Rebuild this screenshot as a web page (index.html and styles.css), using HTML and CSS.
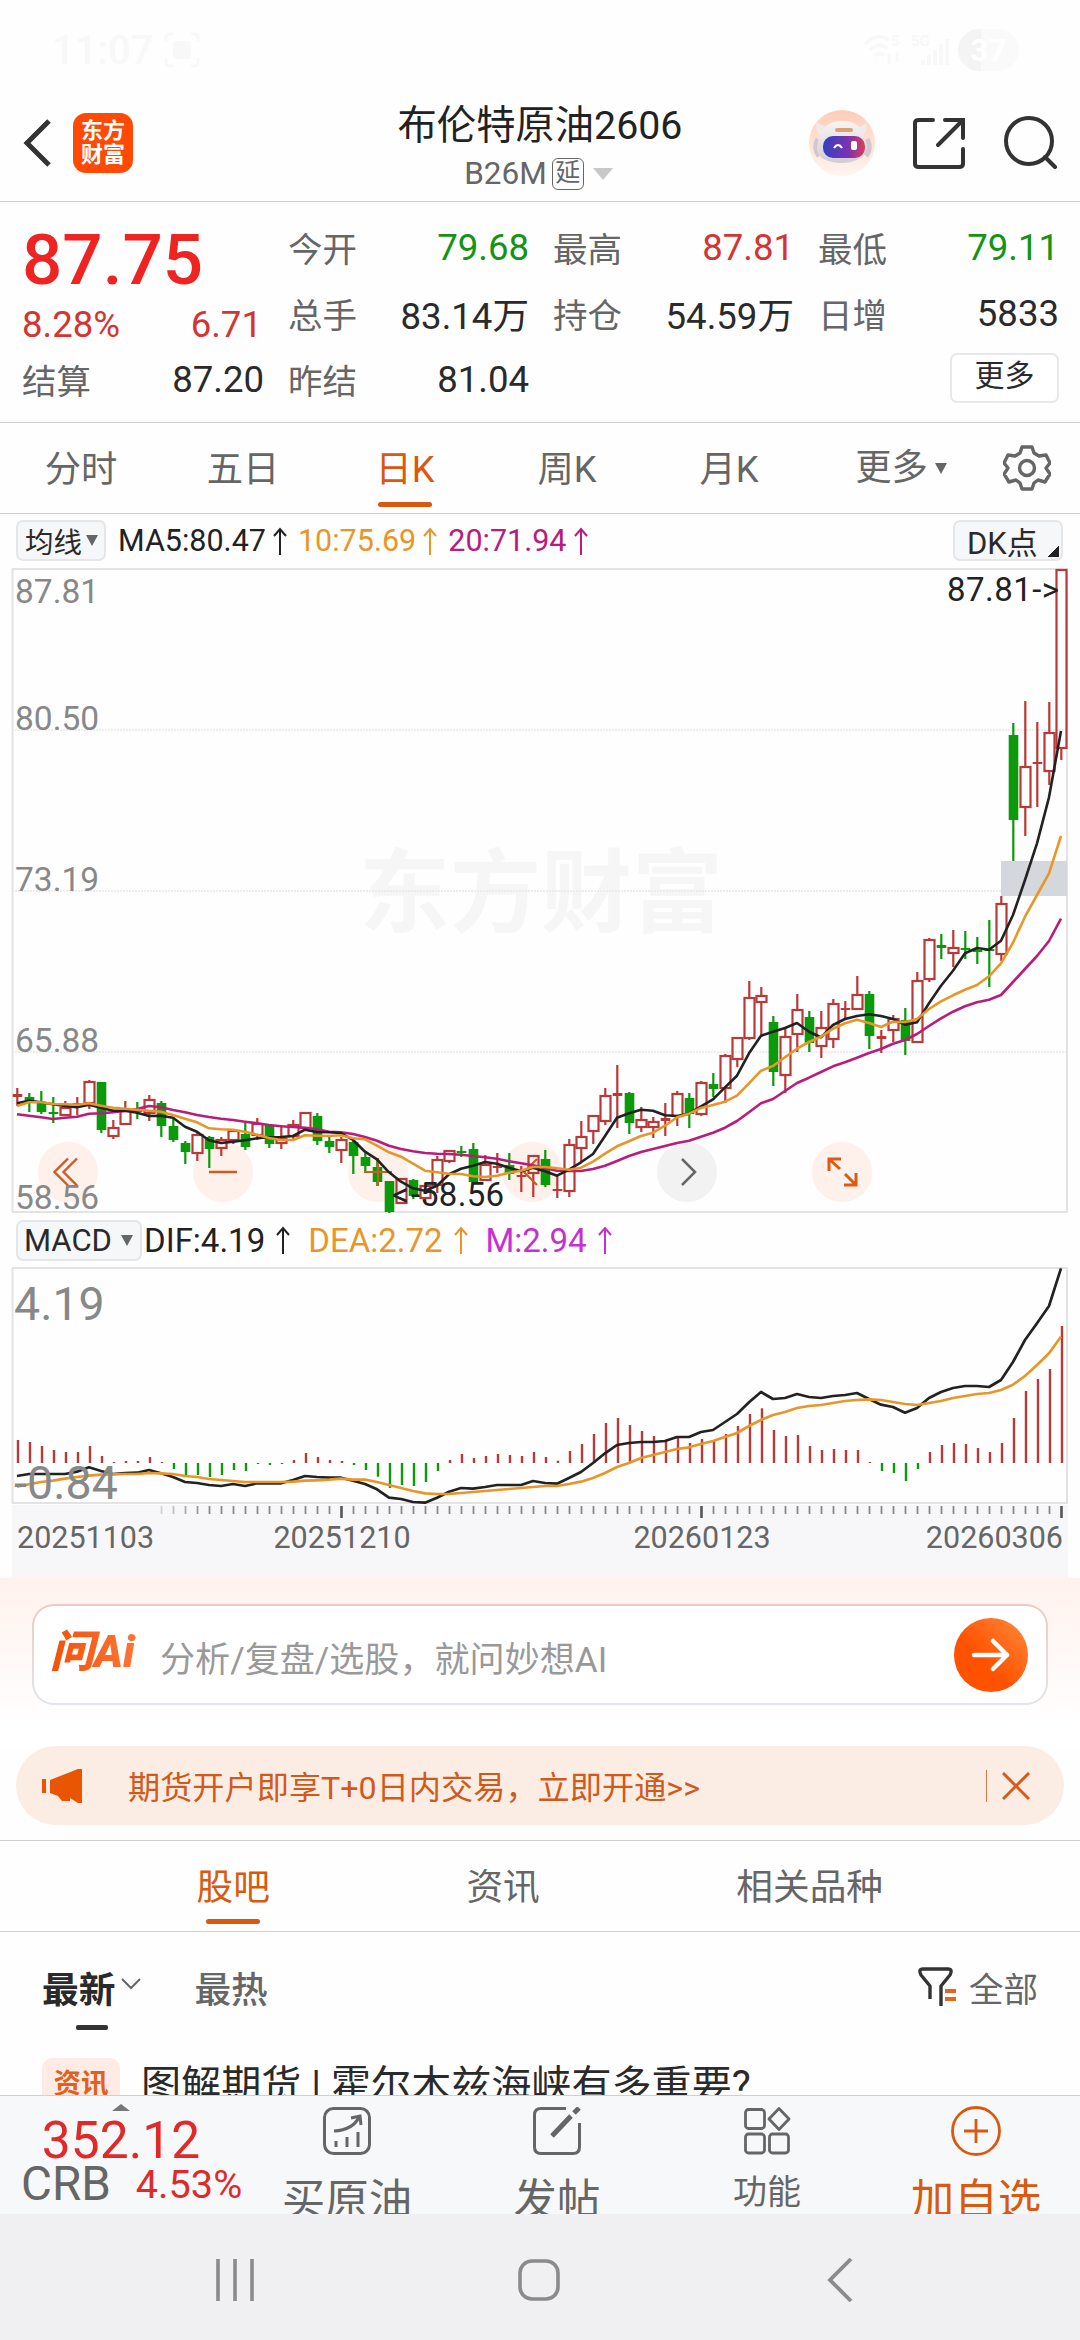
FILE: index.html
```
<!DOCTYPE html>
<html lang="zh-CN">
<head>
<meta charset="utf-8">
<title>布伦特原油2606</title>
<link rel="stylesheet" href="styles.css">
</head>
<body>
<div class="status">
  <span class="clock">11:07</span>
  <svg class="shot" width="36" height="36" viewBox="0 0 36 36"><path d="M2 10V6q0-4 4-4h4M26 2h4q4 0 4 4v4M34 26v4q0 4-4 4h-4M10 34H6q-4 0-4-4v-4" fill="none" stroke="currentColor" stroke-width="3"/><rect x="9" y="9" width="18" height="18" rx="4" fill="currentColor"/></svg>
  <svg class="wifi" width="38" height="36" viewBox="0 0 38 36"><g fill="none" stroke="currentColor" stroke-width="3.5"><path d="M1 12q12-12 24-4M6 18q8-8 17-2M11 24q4-4 9-1"/></g><text x="27" y="14" font-size="15" font-weight="700" fill="currentColor">5</text><path d="M25 22v10M33 30V20" stroke="currentColor" stroke-width="3"/></svg>
  <svg class="cell" width="38" height="36" viewBox="0 0 38 36"><text x="0" y="14" font-size="15" font-weight="700" fill="currentColor">5G</text><path d="M12 33v-5M18 33V23M24 33V18M30 33V12M36 33V7" stroke="currentColor" stroke-width="4"/></svg>
  <span class="battery">37</span>
</div>

<header class="header">
  <div class="header-left">
    <svg width="30" height="50" viewBox="0 0 30 50"><path d="M26 3L4 25l22 22" fill="none" stroke="#333" stroke-width="5"/></svg>
    <div class="brand"><span>东方</span><span>财富</span></div>
  </div>
  <div class="header-title">
    <h1>布伦特原油2606</h1>
    <div class="code">B26M<span class="delay">延</span><i class="tri"></i></div>
  </div>
  <div class="header-right">
    <svg width="66" height="68" viewBox="0 0 66 68">
      <defs>
        <linearGradient id="halo" x1="0" y1="0" x2="0" y2="1"><stop offset="0" stop-color="#ffcdb8"/><stop offset="1" stop-color="#fff6f1"/></linearGradient>
        <linearGradient id="visor" x1="0" y1="0" x2="1" y2="0"><stop offset="0" stop-color="#3340c0"/><stop offset=".6" stop-color="#7a34b0"/><stop offset="1" stop-color="#d8405c"/></linearGradient>
        <linearGradient id="shell" x1="0" y1="0" x2="0" y2="1"><stop offset="0" stop-color="#f8f5f6"/><stop offset="1" stop-color="#d2ccd4"/></linearGradient>
      </defs>
      <circle cx="33" cy="34" r="33" fill="url(#halo)"/>
      <path d="M8 13q4 5 12 4l-8 10q-7-6-4-14M57 14q-3 4-10 4l6 9q7-6 4-13" fill="#f0eaec"/>
      <path d="M9 30q-5 9 1 17M58 30q5 9-1 17" stroke="#cfc8d0" stroke-width="5" fill="none"/>
      <path d="M33 12c13 0 20 6 23 17s1 16-5 20-12 5-18 5-14-1-20-5-6-10-3-20 10-17 23-17z" fill="url(#shell)"/>
      <rect x="14" y="27" width="42" height="22" rx="10" fill="url(#visor)"/>
      <path d="M25 39q4-6 8 0" fill="none" stroke="#fff" stroke-width="2.200"/><rect x="42" y="32" width="6" height="9" rx="2" fill="#fff"/>
      <rect x="26" y="19" width="18" height="4" rx="2" fill="#dca072"/>
    </svg>
    <svg width="52" height="52" viewBox="0 0 52 52" fill="none" stroke="#333" stroke-width="4" stroke-linecap="round"><path d="M20 3H6q-4 0-4 3v41q0 3 4 3h40q4 0 4-3V32M32 3h18v18M49 4L25 28"/></svg>
    <svg width="54" height="54" viewBox="0 0 54 54" fill="none" stroke="#333" stroke-width="4" stroke-linecap="round"><circle cx="25" cy="26" r="23"/><path d="M41 42l10 10"/></svg>
  </div>
</header>

<section class="quote">
  <div class="quote-main">
    <div class="price">87.75</div>
    <div class="pair up"><span>8.28%</span><span class="chg">6.71</span></div>
    <div class="pair"><label>结算</label><span>87.20</span></div>
  </div>
  <div class="quote-grid">
    <div class="pair"><label>今开</label><span class="down">79.68</span></div>
    <div class="pair"><label>最高</label><span class="up">87.81</span></div>
    <div class="pair"><label>最低</label><span class="down">79.11</span></div>
    <div class="pair"><label>总手</label><span>83.14万</span></div>
    <div class="pair"><label>持仓</label><span>54.59万</span></div>
    <div class="pair"><label>日增</label><span>5833</span></div>
    <div class="pair"><label>昨结</label><span>81.04</span></div>
    <div></div>
    <div class="pair end"><button class="more">更多</button></div>
  </div>
</section>

<nav class="periods">
  <span>分时</span><span>五日</span><span class="active">日K</span><span>周K</span><span>月K</span>
  <span class="drop">更多<i class="tri small"></i></span>
  <svg width="48" height="48" viewBox="0 0 48 48" fill="none" stroke="#666" stroke-width="3.4" stroke-linejoin="round"><path d="M19 3h10l2 6 5 3 7-1 4 8-4 5 4 6-5 8-7-2-4 3-2 6H19l-2-6-4-3-7 2-5-8 4-6-4-5 4-8 7 1 5-3z"/><circle cx="24" cy="24" r="7.5"/></svg>
</nav>

<div class="legend">
  <span class="chip">均线<i class="tri small"></i></span>
  <span class="ma5">MA5:80.47<svg class="arr" viewBox="0 0 14 28"><path d="M7 28V2M1 9l6-7 6 7"/></svg></span>
  <span class="ma10">10:75.69<svg class="arr" viewBox="0 0 14 28"><path d="M7 28V2M1 9l6-7 6 7"/></svg></span>
  <span class="ma20">20:71.94<svg class="arr" viewBox="0 0 14 28"><path d="M7 28V2M1 9l6-7 6 7"/></svg></span>
  <span class="chip dk">DK点<i class="corner"></i></span>
</div>

<svg class="chart" id="kline" width="1080" height="646" viewBox="0 568 1080 646"></svg>

<div class="legend macd">
  <span class="chip">MACD<i class="tri small"></i></span>
  <span class="ma5">DIF:4.19<svg class="arr" viewBox="0 0 14 28"><path d="M7 28V2M1 9l6-7 6 7"/></svg></span>
  <span class="ma10">DEA:2.72<svg class="arr" viewBox="0 0 14 28"><path d="M7 28V2M1 9l6-7 6 7"/></svg></span>
  <span class="hist">M:2.94<svg class="arr" viewBox="0 0 14 28"><path d="M7 28V2M1 9l6-7 6 7"/></svg></span>
</div>

<svg class="chart" id="macd" width="1080" height="312" viewBox="0 1266 1080 312"></svg>

<section class="ask">
  <div class="ask-box">
    <span class="ask-logo">问Ai</span>
    <span class="ask-hint">分析/复盘/选股，就问妙想AI</span>
    <span class="go"><svg width="40" height="34" viewBox="0 0 40 34" fill="none" stroke="#fff" stroke-width="4.500" stroke-linecap="round" stroke-linejoin="round"><path d="M3 17h33M22 3l14 14-14 14"/></svg></span>
  </div>
</section>

<div class="banner">
  <svg width="40" height="36" viewBox="0 0 40 36" fill="#ea5504"><path d="M0 11h4v14H0zM8 12L36 1h4v34h-4l-8-5v3h-8l-4-5-8-3z"/></svg>
  <span class="banner-text">期货开户即享T+0日内交易，立即开通&gt;&gt;</span>
  <i class="rule"></i>
  <svg width="28" height="28" viewBox="0 0 28 28" stroke="#d9591a" stroke-width="3"><path d="M1 1l26 26M27 1L1 27"/></svg>
</div>

<nav class="tabs">
  <span class="active">股吧</span><span>资讯</span><span>相关品种</span>
</nav>

<div class="sort">
  <span class="on">最新</span>
  <svg class="chev" width="20" height="12" viewBox="0 0 20 12" fill="none" stroke="#666" stroke-width="2"><path d="M1 1l9 9 9-9"/></svg>
  <span class="hot">最热</span>
  <svg class="filter" width="40" height="40" viewBox="0 0 40 40" fill="none" stroke="#333" stroke-width="3.4" stroke-linejoin="round"><path d="M12 32V19L3 8Q0 2 5 2h25q5 0 2 6l-9 11v20"/><path d="M27 24h11M27 32h11" stroke="#e8641b" stroke-width="4"/></svg>
  <span class="all">全部</span>
</div>

<article class="post">
  <span class="tag">资讯</span>
  <span class="post-title">图解期货 | 霍尔木兹海峡有多重要?</span>
</article>

<footer class="actions">
  <div class="crb">
    <i class="tri-up"></i>
    <div class="crb-value">352.12</div>
    <div class="crb-row"><span class="crb-name">CRB</span><span class="crb-pct">4.53%</span></div>
  </div>
  <div class="action">
    <svg width="48" height="48" viewBox="0 0 48 48" fill="none" stroke="#666" stroke-width="3"><rect x="1.5" y="1.5" width="45" height="45" rx="9"/><path d="M11 24q19-1 25-14M28 11l9-2 1 9M13 34v6M24 30v10M35 25v15"/></svg>
    <span>买原油</span>
  </div>
  <div class="action">
    <svg width="48" height="48" viewBox="0 0 48 48" fill="none" stroke="#666" stroke-width="3"><path d="M33 1.500H8q-6.500 0-6.500 6.500v32q0 6.500 6.500 6.500h32q6.500 0 6.500-6.500V16"/><path d="M19 29L38 9M41 6l5-5" stroke-width="5"/></svg>
    <span>发帖</span>
  </div>
  <div class="action fn">
    <svg width="48" height="48" viewBox="0 0 48 48" fill="none" stroke="#666" stroke-width="2.800"><rect x="2.500" y="2.500" width="19" height="19" rx="3"/><rect x="2.500" y="27" width="19" height="19" rx="3"/><rect x="26.500" y="27" width="19" height="19" rx="3"/><path d="M36 1.500L46 12 36 22.500 26 12z" stroke-linejoin="round"/></svg>
    <span>功能</span>
  </div>
  <div class="action add">
    <svg width="50" height="50" viewBox="0 0 50 50" fill="none" stroke="#d9590f" stroke-width="2.800"><circle cx="25" cy="25" r="23.500"/><path d="M13 25h24M25 13v24"/></svg>
    <span>加自选</span>
  </div>
</footer>

<div class="sysnav">
  <svg width="38" height="42" viewBox="0 0 38 42" stroke="#8b8b8d" stroke-width="3.600"><path d="M2 0v42M19 0v42M36 0v42"/></svg>
  <svg width="42" height="42" viewBox="0 0 42 42" fill="none" stroke="#8b8b8d" stroke-width="3.600"><rect x="2" y="2" width="38" height="38" rx="12"/></svg>
  <svg width="26" height="44" viewBox="0 0 26 44" fill="none" stroke="#8b8b8d" stroke-width="3.800"><path d="M24 1L3 22l21 21"/></svg>
</div>
<script src="chart.js"></script>
</body>
</html>
```
FILE: styles.css
```
* { box-sizing: border-box; }
body { margin: 0; width: 1080px; height: 2340px; overflow: hidden; background: #fefefe; color: #2a2a2a; font-family: Roboto, "Noto Sans CJK SC", sans-serif; display: flex; flex-direction: column; }
body > * { flex: none; }
svg { display: block; flex: none; }
h1 { margin: 0; font-weight: 400; }
i { display: block; flex: none; }

.status { height: 100px; padding: 0 61px 0 52px; display: flex; align-items: center; color: #f8f8f8; font-weight: 500; }
.clock { font-size: 40px; width: 112px; }
.wifi { margin-left: auto; }
.cell { margin-left: 9px; }
.battery { margin-left: 9px; width: 61px; height: 42px; border-radius: 21px; background: linear-gradient(90deg, #f4f4f4 37%, #fafafa 37%); color: #fff; font-size: 32px; line-height: 42px; text-align: center; font-weight: 700; }

.header { height: 102px; border-bottom: 1px solid #d0d0d0; display: grid; grid-template-columns: 340px 1fr 340px; }
.header-left { display: flex; align-items: center; padding: 0 0 16px 23px; gap: 20px; }
.brand { width: 60px; height: 60px; border-radius: 13px; background: #ff4a05; color: #fff; font-size: 22px; font-weight: 700; line-height: 24px; display: flex; flex-direction: column; align-items: center; justify-content: center; }
.header-title { display: flex; flex-direction: column; align-items: center; }
.header-title h1 { font-size: 39.300px; line-height: 52px; color: #222; }
.code { display: flex; align-items: center; font-size: 31.500px; line-height: 43px; color: #666; padding-right: 3px; }
.delay { margin-left: 5px; width: 32px; height: 32px; border: 1.500px solid #666; border-radius: 6px; font-size: 25px; line-height: 28px; text-align: center; }
.tri { width: 0; height: 0; border: 10px solid transparent; border-top: 12px solid #c8c8c8; border-bottom: 0; margin-left: 9px; }
.tri.small { border-width: 11px 6px 0; border-top-color: #666; margin-left: 4px; }
.header-right { display: flex; align-items: center; gap: 38px; padding: 0 0 16px 69px; }
.header-right svg:last-child { margin-left: 1px; margin-top: -2px; }

.quote { height: 221px; border-bottom: 1px solid #d0d0d0; padding: 12px 21px 0 22px; display: grid; grid-template-columns: 242px 1fr; column-gap: 24px; }
.quote-grid { display: grid; grid-template-columns: repeat(3, 1fr); grid-auto-rows: 66px; column-gap: 24px; }
.pair { display: flex; justify-content: space-between; align-items: center; font-size: 36.600px; height: 66px; }
.pair label { font-size: 34.500px; color: #666; }
.pair.end { justify-content: flex-end; }
.up { color: #d33532; }
.down { color: #139413; }
.price { height: 89px; font-size: 71px; line-height: 92px; font-weight: 500; color: #ee2423; }
.quote-main .pair.up { height: 43px; }
.quote-main .chg { margin-right: 2px; }
.more { width: 109px; height: 50px; margin-top: -3px; border: 2px solid #e8e8e8; border-radius: 7px; background: #fff; color: #2a2a2a; font: inherit; font-size: 30px; line-height: 40px; padding: 0 0 4px; }

.periods { height: 91px; border-bottom: 1px solid #d0d0d0; display: grid; grid-template-columns: repeat(5, 162px) 182px 1fr; font-size: 36.300px; color: #666; align-items: center; text-align: center; }
.periods span { height: 90px; line-height: 94px; }
.periods .active, .tabs .active { color: #d9590f; position: relative; }
.active::after { content: ""; position: absolute; left: 50%; margin-left: -27px; bottom: 6px; width: 54px; height: 5px; border-radius: 3px; background: #d9590f; }
.periods .drop { display: flex; align-items: center; justify-content: center; }
.periods .drop .tri { margin-left: 7px; }
.periods svg { margin-left: 11px; }

.legend { height: 54px; display: flex; align-items: center; font-size: 30.500px; padding: 0 17px 1px 16px; }
.legend > span { display: flex; align-items: center; }
.chip { height: 41px; border: 2px solid #e4e6ea; border-radius: 7px; background: #f6f7f9; font-size: 28.500px; padding: 0 6px 0 7px; margin-right: 12px; }
.dk { margin: 0 0 0 auto; width: 110px; padding: 0 2px 0 12px; font-size: 31px; }
.corner { width: 11px; height: 12px; background: linear-gradient(135deg, transparent 50%, #222 50%); margin: 20px 0 0 10px; }
.arr { width: 14px; height: 28px; fill: none; stroke: currentColor; stroke-width: 2; margin: 0 11px 0 7px; }
.ma5 { color: #222; }
.ma10 { color: #e8962a; }
.ma20 { color: #b81c7c; }
.hist { color: #c62fd0; }
.macd { height: 52px; padding-bottom: 0; font-size: 33px; }
.macd .chip { font-size: 31px; margin-right: 2px; padding: 0 7px 0 6px; width: 126px; justify-content: space-between; }
.macd .arr { margin: 0 18px 0 11px; }

.axis { font-size: 33.500px; fill: #888; }
.axis.big { font-size: 46.500px; }
.note { font-size: 33px; fill: #222; }
.date { font-size: 30.500px; fill: #666; }
.mark { font-family: "Noto Sans CJK SC", sans-serif; font-size: 91px; font-weight: 700; fill: #f6f6f6; }

.ask { height: 168px; padding: 26px 32px 0; background: linear-gradient(#fff2ed, #fff 88%); }
.ask-box { height: 101px; border: 2px solid transparent; border-radius: 22px; background: linear-gradient(#fff, #fff) padding-box, linear-gradient(#eecbc0, #dfe6ee) border-box; display: flex; align-items: center; padding: 0 18px 0 16px; }
.ask-logo { font-size: 44px; line-height: 60px; font-weight: 900; font-style: italic; background: linear-gradient(90deg, #f4500a, #ff8040); -webkit-background-clip: text; background-clip: text; color: transparent; width: 110px; padding-bottom: 6px; white-space: nowrap; }
.ask-hint { font-size: 35.100px; color: #999; padding-top: 3px; }
.go { margin-left: auto; width: 74px; height: 74px; border-radius: 50%; background: linear-gradient(45deg, #ff5200 40%, #ff8a3c); display: flex; align-items: center; justify-content: center; }

.banner { height: 79px; margin: 0 16px; border-radius: 40px; background: #fcede4; display: flex; align-items: center; padding: 0 34px 0 26px; color: #cf5a1c; }
.banner-text { font-size: 32.200px; margin-left: 46px; padding-bottom: 2px; }
.rule { width: 1px; height: 32px; background: #cf7a4a; margin: 0 15px 0 auto; }

.tabs { height: 92px; margin-top: 15px; border-top: 1px solid #d0d0d0; border-bottom: 1px solid #d0d0d0; display: flex; font-size: 36.700px; line-height: 94px; color: #666; }
.tabs span { margin-left: 196.500px; }
.tabs .active::after { bottom: 7px; }

.sort { height: 126px; display: flex; align-items: center; padding: 0 42px 17px 42px; font-size: 36.700px; color: #666; }
.sort .on { color: #2a2a2a; font-weight: 700; position: relative; }
.sort .on::after { content: ""; position: absolute; left: 34px; bottom: -16px; width: 32px; height: 5px; border-radius: 2px; background: #333; }
.sort .hot { font-weight: 500; margin-left: 53px; }
.sort .chev { margin: 0 0 6px 6px; }
.filter { margin-left: auto; }
.all { font-size: 34.500px; margin-left: 11px; }

.post { height: 37px; overflow: hidden; display: flex; align-items: flex-start; padding-left: 42px; }
.tag { width: 78px; height: 52px; line-height: 52px; border-radius: 10px; background: #feece4; color: #e2601c; font-size: 27.500px; font-weight: 700; text-align: center; flex: none; }
.post-title { font-size: 40.100px; line-height: 56px; margin-left: 21px; white-space: nowrap; }

.actions { height: 119px; overflow: hidden; border-top: 1px solid #d0d0d0; background: #f7f8fa; display: grid; grid-template-columns: 242px 210px 210px 210px 208px; color: #666; }
.crb { display: flex; flex-direction: column; align-items: center; padding-top: 8px; white-space: nowrap; }
.tri-up { border: 9px solid transparent; border-bottom: 7px solid #777; border-top: 0; }
.crb-value { font-size: 51.500px; line-height: 56px; color: #e02a2a; margin-top: 2px; }
.crb-row { display: flex; align-items: baseline; line-height: 30px; align-self: flex-start; padding-left: 21px; }
.crb-name { font-size: 47.500px; }
.crb-pct { font-size: 39.700px; color: #e02a2a; margin-left: 25px; position: relative; top: -2px; }
.action { display: flex; flex-direction: column; align-items: center; padding-top: 11px; font-size: 43.500px; white-space: nowrap; }
.action span { line-height: 60px; margin-top: 16px; }
.fn { font-size: 34px; }
.fn span { line-height: 46px; margin-top: 14px; }
.add { color: #d9590f; padding-top: 10px; }
.add span { margin-top: 15px; }

.sysnav { height: 126px; background: #f0f0f2; display: flex; align-items: center; padding: 6px 227px 0 216px; justify-content: space-between; }
.sysnav svg:nth-child(2) { margin-right: 4px; }
```
FILE: chart.js
```
const X = i => 17 + 12 * i;
const RED = '#b83a38', GREEN = '#0a9a0a';

// one candle per day: direction, high, body top, body bottom, low
const candles = `r 1088 1094 1097 1106|g 1093 1097 1101 1112|g 1091 1102 1112 1114|g 1097 1112 1113 1123|r 1101 1108 1115 1115|r 1097 1103 1104 1115|r 1080 1082 1103 1109|g 1082 1082 1130 1133|r 1120 1128 1136 1139|r 1101 1111 1124 1124|g 1102 1110 1112 1119|r 1095 1100 1113 1121|g 1101 1103 1126 1137|g 1117 1126 1140 1142|g 1141 1143 1152 1164|r 1132 1135 1153 1161|g 1136 1137 1149 1168|r 1137 1140 1148 1156|r 1129 1131 1140 1144|g 1122 1134 1147 1150|r 1118 1124 1135 1140|g 1124 1125 1144 1148|r 1125 1139 1143 1149|r 1120 1125 1136 1140|r 1112 1113 1128 1130|g 1113 1116 1141 1145|g 1137 1141 1147 1153|r 1137 1140 1150 1163|g 1141 1142 1156 1174|g 1153 1157 1166 1171|g 1158 1167 1182 1186|g 1181 1181 1212 1213|r 1178 1179 1203 1204|g 1179 1180 1196 1199|r 1183 1186 1198 1202|r 1156 1160 1185 1193|r 1150 1151 1161 1163|g 1146 1151 1152 1157|g 1143 1149 1182 1183|r 1155 1165 1180 1181|r 1153 1166 1168 1173|g 1153 1165 1174 1180|r 1166 1175 1176 1192|r 1155 1156 1173 1197|g 1150 1159 1185 1187|r 1175 1189 1190 1198|r 1139 1145 1191 1197|r 1121 1137 1148 1162|r 1115 1116 1131 1144|r 1088 1096 1121 1125|r 1065 1093 1096 1128|g 1092 1093 1123 1134|r 1107 1120 1127 1132|r 1117 1122 1127 1138|r 1103 1118 1121 1136|r 1091 1094 1116 1126|g 1093 1098 1114 1128|r 1081 1083 1114 1116|g 1073 1084 1089 1097|r 1054 1056 1088 1103|r 1037 1038 1059 1067|r 981 998 1038 1040|r 987 996 1002 1037|g 1016 1022 1072 1086|r 1027 1037 1075 1093|r 994 1010 1034 1052|g 1011 1017 1043 1052|r 1011 1028 1046 1058|r 999 1004 1039 1048|r 1001 1008 1009 1018|r 976 995 1009 1010|g 991 994 1036 1049|r 1030 1036 1039 1053|r 1015 1019 1030 1042|g 1008 1020 1041 1055|r 972 981 1042 1042|r 938 940 979 982|g 934 945 948 959|r 930 948 953 967|g 931 948 950 959|g 937 950 952 964|g 920 949 951 987|r 896 904 954 961|g 723 735 820 861|r 701 767 807 836|r 722 762 763 807|r 702 733 771 785|r 569 570 748 760`
  .split('|').map(s => s.split(' '));

// moving averages, sampled per day; each chunk carries its own origin
const series = chunks => chunks.flatMap(([y0, vs]) => vs.split(' ').map(v => y0 + v / 3));
const ma5 = series([
  [1060, '130 122 127 133 138 142 134 143 152 152 158 168 167 173 200 215 241 249 245 241 235 232 231 228 209 216 217 219 240'],
  [1020, '395 418 457 485 505 512 497 463 446 437 426 431 443 454 443 454 467 449 427 402 348 293 280 269 272 286 288 281 259 238'],
  [840, '742 707 640 587 575 564 549 575 592 555 537 528 523 528 537 554 547 490 437 392 340 324 329 302'],
  [560, '1065 960 850 712 513']]);
const ma10 = series([
  [1060, '138 127 127 132 133 134 130 137 143 146 149 152 155 165 176 187 205 208 209 215 224 234 240 240 226 227 228 226 235'],
  [1020, '358 377 397 410 431 452 457 461 462 469 471 467 458 452 441 441 445 449 443 425 401 379 364 348 338 317 292 281 264 255'],
  [840, '785 767 730 692 678 652 626 606 590 566 550 539 549 561 545 546 537 507 484 466 449 435 409 370'],
  [560, '1148 1070 1005 940 828']]);
const ma20 = series([
  [1060, '163 167 172 177 173 170 161 160 157 153 147 138 142 150 157 165 171 176 180 185 190 195 199 201 203 208 215 217 222'],
  [1020, '351 362 377 387 394 399 401 402 404 408 412 416 424 430 436 444 452 453 453 447 437 423 408 396 387 378 369 362 350 338'],
  [840, '863 843 817 790 777 753 729 713 696 679 667 653 639 627 611 600 582 558 535 515 499 487 479 465 426 387 348 303 236']]);

const line = (ys, color, w) => `<polyline points="${ys.map((y, i) => X(i) + ',' + y.toFixed(1)).join(' ')}" fill="none" stroke="${color}" stroke-width="${w}" stroke-linejoin="round"/>`;
const text = (x, y, cls, s, extra = '') => `<text x="${x}" y="${y}" class="${cls}" ${extra}>${s}</text>`;
const frame = (y1, y2) => `<path d="M12.500 ${y1}V${y2}M1067 ${y1}V${y2}M12 ${y1}H1068M12 ${y2}H1068" stroke="#e3e3e3" stroke-width="2"/>`;

let k = text(359, 925, 'mark', '东方财富');
for (const y of [730, 891, 1052]) k += `<path d="M12 ${y}H1068" stroke="#e8e8e8" stroke-width="1.500" stroke-dasharray="2 1"/>`;
k += frame(569, 1212);
k += '<rect x="1001" y="861" width="66" height="35" fill="#d4d8dd"/>';

// floating chart controls
for (const cx of [68, 223, 378, 532, 842]) k += `<circle cx="${cx}" cy="1172" r="30" fill="#fef0ea"/>`;
k += '<circle cx="687" cy="1172" r="30" fill="#f2f2f3"/>';
k += '<g fill="none" stroke="#cf5a22" stroke-width="2.400"><path d="M68 1158.500l-13.500 13.500 13.500 13.500M77 1158.500l-13.500 13.500 13.500 13.500M209 1172h28"/></g>';
k += '<g fill="none" stroke="#de5a12" stroke-width="3"><path d="M841 1159h-12v12M829 1159l11 10M844 1185h12v-12M856 1185l-11-11"/></g>';
k += '<path d="M682 1159l13 13-13 13" fill="none" stroke="#666" stroke-width="2.500"/>';

candles.forEach(([d, h, t, b, l], i) => {
  const x = X(i) + 0.3, c = d === 'r' ? RED : GREEN;
  const flat = b - t < 4;
  k += `<path d="M${x} ${h}V${flat || d === 'g' ? l : t}M${x} ${b}V${l}" stroke="${c}" stroke-width="2.2"/>`;
  if (d === 'g' || flat) {
    k += `<rect x="${x - 4.6}" y="${t}" width="9.6" height="${Math.max(b - t, 2)}" fill="${c}"/>`;
  } else {
    k += `<rect x="${x - 4.8}" y="${t}" width="10" height="${b - t}" fill="none" stroke="${c}" stroke-width="2.2"/>`;
  }
});
k += '<path d="M364 1172h28M378 1158v28M537 1159l-13 13 13 13" fill="none" stroke="#cf5a22" stroke-width="2.2"/>';
k += line(ma20, '#b81c7c', 2.6) + line(ma5, '#222', 2.6) + line(ma10, '#e8962a', 2.6);
k += text(15, 603, 'axis', '87.81') + text(15, 730, 'axis', '80.50') + text(15, 891, 'axis', '73.19') + text(15, 1052, 'axis', '65.88') + text(15, 1209, 'axis', '58.56');
k += text(947, 601, 'note', '87.81-&gt;', 'textLength="112"');
k += text(392, 1206, 'note', '&lt;-', 'textLength="28"') + text(420, 1206, 'note', '58.56', 'textLength="84"');
document.getElementById('kline').innerHTML = k;

const bars = '690 696 708 720 726 726 708 738 756 753 753 741 756 777 795 795 801 795 780 783 762 765 762 750 729 741 750 753 765 780 800 834 825 828 816 783 750 732 744 738 732 735 738 726 741 752 723 702 672 639 624 645 663 678 690 684 699 687 690 672 648 612 595 660 678 675 708 720 717 720 720 756 783 789 813 777 726 705 699 702 714 726 699 624 543 507 477 348'.split(' ').map(v => 1210 + v / 3);
const dif = series([[1210, '798 792 792 792 792 785 772 783 792 789 788 780 790 801 816 819 825 828 822 828 820 820 820 810 798 801 803 803 812 822 838 863 867 876 878 863 845 834 836 831 825 825 825 813 819 821 804 786 759 730 705 699 696 696 693 681 681 666 660 636 612 577 546 567 564 552 561 564 558 555 549 567 584 591 608 594 564 546 534 528 528 531 510 456 390 340 288 175']]);
const dea = series([[1210, '830 823 816 812 806 801 797 794 793 792 792 789 790 792 798 801 807 810 813 816 816 816 816 815 812 811 809 806 809 809 816 825 834 843 850 852 852 849 846 843 840 837 834 831 828 828 822 815 804 789 771 759 744 735 726 717 712 702 693 681 669 648 630 615 606 594 588 585 579 573 570 568 570 576 582 585 579 573 564 558 552 549 540 524 498 465 430 380']]);

let m = '<rect x="12" y="1505" width="1056" height="73" fill="#f7f7f9"/>' + frame(1268, 1503);
bars.forEach((y, i) => { m += `<path d="M${X(i) + 1} 1463V${y.toFixed(1)}" stroke="${y < 1463 ? RED : GREEN}" stroke-width="2.4"/>`; });
m += line(dif, '#222', 2.7) + line(dea, '#e8962a', 2.7);
m += text(14, 1320, 'axis big', '4.19') + text(14, 1499, 'axis big', '-0.84', 'textLength="104"');
for (let i = 12; i < 88; i++) {
  const major = i % 30 === 27;
  m += `<path d="M${X(i) + 0.5} 1506V${major ? 1518 : 1514}" stroke="${major ? '#555' : '#888'}" stroke-width="${major ? 2.6 : 1.8}" opacity="${i < 16 ? (i - 10) / 6 : 1}"/>`;
}
m += text(17, 1548, 'date', '20251103') + text(342, 1548, 'date', '20251210', 'text-anchor="middle"') + text(702, 1548, 'date', '20260123', 'text-anchor="middle"') + text(1063, 1548, 'date', '20260306', 'text-anchor="end"');
document.getElementById('macd').innerHTML = m;
```
